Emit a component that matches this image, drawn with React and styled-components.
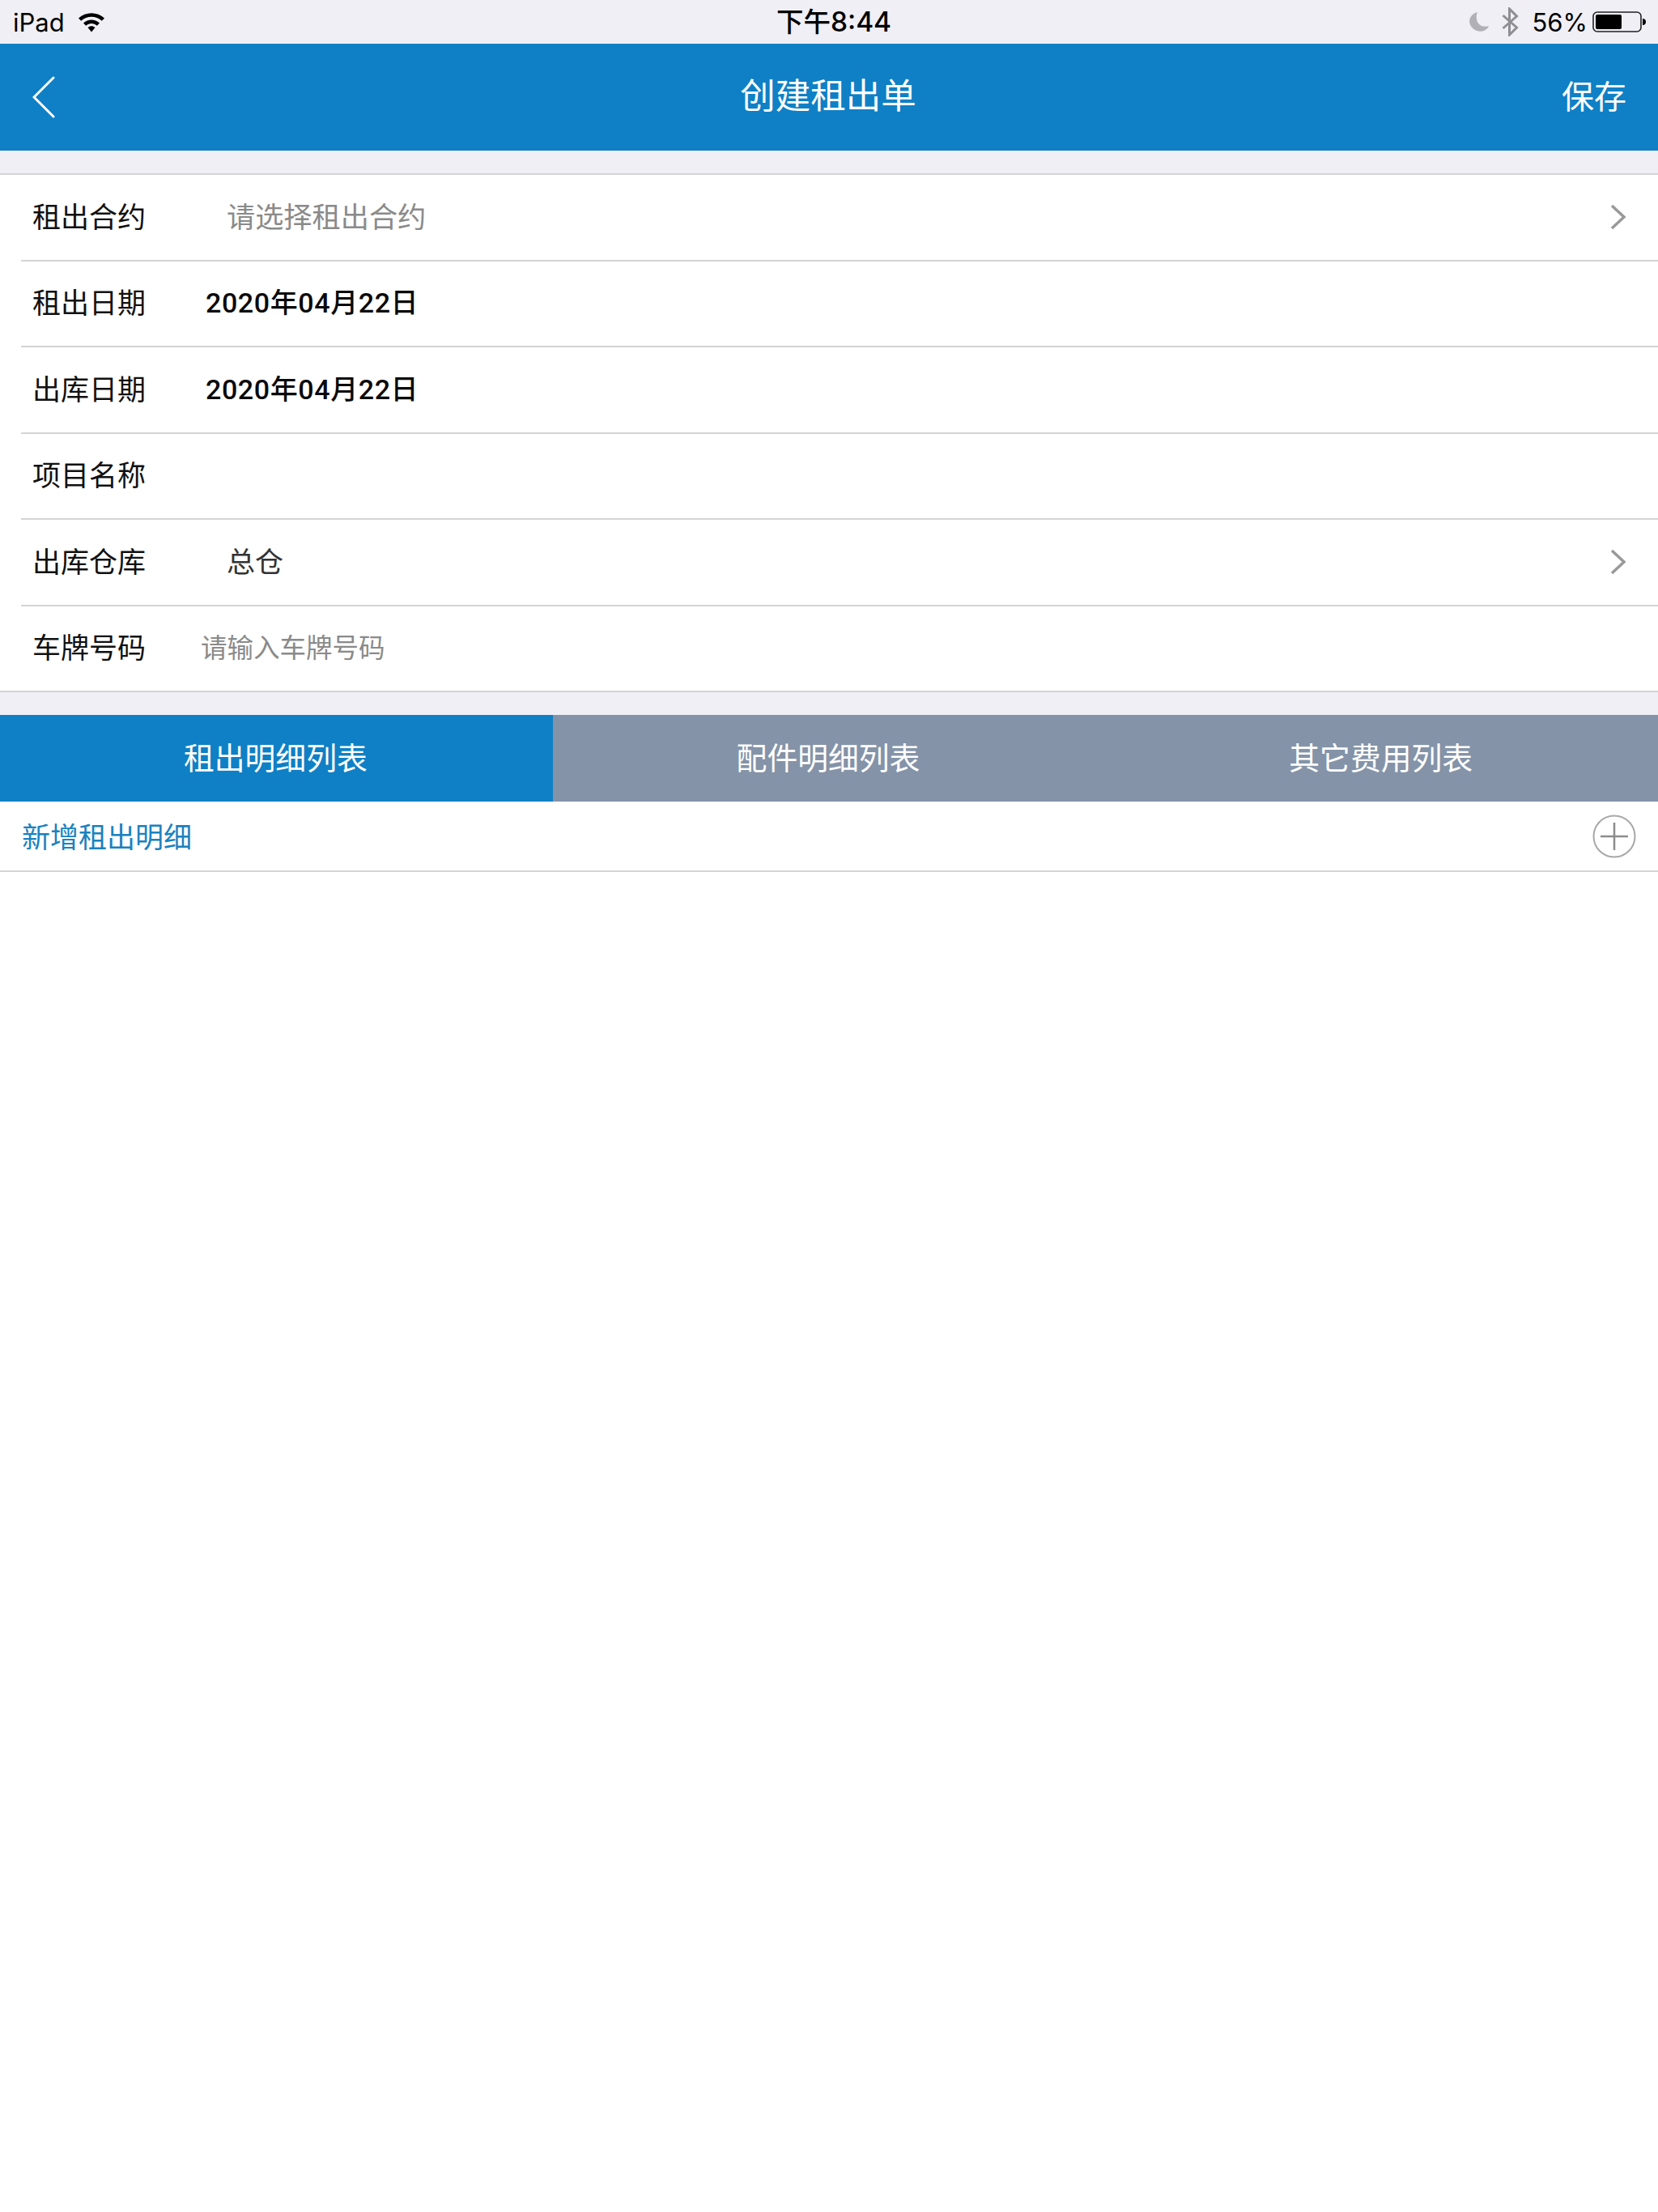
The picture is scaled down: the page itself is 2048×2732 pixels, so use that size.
import React from 'react';
import styled, { createGlobalStyle } from 'styled-components';

const GlobalStyle = createGlobalStyle`
  html, body {
    margin: 0;
    padding: 0;
    background: #fff;
    font-family: "Noto Sans CJK SC", "Liberation Sans", sans-serif;
  }
`;

const Page = styled.div`
  width: 2048px;
  height: 2732px;
  background: #fff;
  overflow: hidden;
`;

const StatusBar = styled.div`
  position: relative;
  height: 54px;
  padding: 0 15px 0 16px;
  box-sizing: border-box;
  background: #efeff5;
  display: flex;
  align-items: center;
  justify-content: space-between;
  color: #000;
  font-family: "Inter", "Liberation Sans", sans-serif;
  font-size: 31px;
`;

const StatusGroup = styled.div`
  display: flex;
  align-items: center;
  gap: ${(p) => p.$gap}px;
`;

const Clock = styled.div`
  position: absolute;
  left: 960px;
  top: 0;
  width: 140px;
  display: flex;
  justify-content: center;
  font-size: 33.5px;
  font-weight: 500;
  white-space: nowrap;
  font-family: "Inter", "Noto Sans CJK SC", sans-serif;
`;

const NavBar = styled.div`
  height: 132px;
  padding: 0 40px;
  background: #0f80c5;
  display: flex;
  align-items: center;
  justify-content: space-between;
  color: #fff;
`;

const NavTitle = styled.div`
  font-size: 43.5px;
  line-height: 1;
  margin-right: 3px;
  margin-bottom: 9px;
`;

const SaveLink = styled.div`
  font-size: 40px;
  line-height: 1;
  width: 80px;
  margin-right: -1px;
  margin-bottom: 7px;
`;

const BackIcon = styled.svg`
  width: 80px;
  height: 52px;
  display: block;
`;

const Gap = styled.div`
  height: 28px;
  background: #efeff5;
`;

const Form = styled.div`
  background: #fff;
  border-top: 2px solid #d4d4d6;
  border-bottom: 2px solid #d4d4d6;
`;

const Row = styled.div`
  height: 98.5px;
  margin-left: 26px;
  padding: 0 38px 6px 14px;
  display: flex;
  align-items: center;
  & + & {
    border-top: 2px solid #d4d4d6;
  }
`;

const Label = styled.div`
  width: 140px;
  flex: none;
  font-size: 35px;
  color: #111;
`;

const Value = styled.div`
  margin-left: ${(p) => p.$offset}px;
  font-size: ${(p) => p.$size}px;
  font-weight: ${(p) => p.$weight || 400};
  letter-spacing: ${(p) => p.$spacing || 0}px;
  color: ${(p) => p.$color};
  font-family: ${(p) => (p.$latin ? '"Roboto", "Noto Sans CJK SC", sans-serif' : 'inherit')};
  flex: 1;
`;

const Chevron = styled.svg`
  width: 22px;
  height: 34px;
  margin-top: 6px;
  display: block;
  flex: none;
`;

const Tabs = styled.div`
  display: flex;
  height: 107px;
`;

const Tab = styled.div`
  width: 683px;
  padding: 0 2px 7px 0;
  box-sizing: border-box;
  display: flex;
  align-items: center;
  justify-content: center;
  background: ${(p) => (p.$active ? '#0f80c5' : '#8493a8')};
  color: #fff;
  font-size: 37.8px;
`;

const AddRow = styled.div`
  height: 85px;
  padding: 0 27px;
  display: flex;
  align-items: center;
  justify-content: space-between;
  border-bottom: 2px solid #d4d4d6;
`;

const AddLabel = styled.div`
  font-size: 35px;
  color: #1a82bf;
  margin-bottom: 2px;
`;

const PlusIcon = styled.svg`
  width: 54px;
  height: 54px;
  display: block;
`;

const rows = [
  { label: '租出合约', value: '请选择租出合约', offset: 100, size: 35.2, color: '#8a8a8a', more: true },
  { label: '租出日期', value: '2020年04月22日', offset: 74, size: 34, spacing: 0.6, color: '#0a0a0a', weight: 500, latin: true },
  { label: '出库日期', value: '2020年04月22日', offset: 74, size: 34, spacing: 0.6, color: '#0a0a0a', weight: 500, latin: true },
  { label: '项目名称' },
  { label: '出库仓库', value: '总仓', offset: 100, size: 35, color: '#333', more: true },
  { label: '车牌号码', value: '请输入车牌号码', offset: 68, size: 32.5, color: '#8a8a8a' },
];

const App = () => (
  <Page>
    <GlobalStyle />
    <StatusBar>
      <StatusGroup $gap={16}>
        <span>iPad</span>
        <svg width="34" height="26" viewBox="0 0 34 26">
          <path d="M1 8.5C10 0 24 0 33 8.5L29.8 11.8C22.5 5 11.5 5 4.2 11.8Z" fill="#000" />
          <path d="M7 14.5C13 9 21 9 27 14.5L23.8 17.8C19.5 14 14.5 14 10.2 17.8Z" fill="#000" />
          <path d="M12.5 20C15.5 17.5 18.5 17.5 21.5 20L17 25.5Z" fill="#000" />
        </svg>
      </StatusGroup>
      <Clock>下午8:44</Clock>
      <StatusGroup $gap={15}>
        <StatusGroup $gap={14}>
          <svg width="26" height="26" viewBox="0 0 26 26">
            <path d="M11 1C3.5 3 0 9 1.5 15C3.5 22.5 13 27 20 23.5C22.5 22 24 20.5 25 18C18.5 20 12.5 17.5 10.5 12C9.5 8 9.5 4 11 1Z" fill="#b0b0b6" />
          </svg>
          <svg width="23" height="36" viewBox="0 0 22 36">
            <path d="M2 10L19 25L10 34V2L19 11L2 26" fill="none" stroke="#8e8e93" strokeWidth="3" />
          </svg>
        </StatusGroup>
        <StatusGroup $gap={6}>
          <span>56%</span>
          <svg width="66" height="26" viewBox="0 0 66 26">
            <rect x="1" y="1" width="59" height="24" rx="5" fill="none" stroke="#222" strokeWidth="1.6" />
            <rect x="4" y="4" width="32" height="18" rx="2" fill="#000" />
            <path d="M62 9C65 9 66 11 66 13C66 15 65 17 62 17Z" fill="#000" />
          </svg>
        </StatusGroup>
      </StatusGroup>
    </StatusBar>
    <NavBar>
      <BackIcon viewBox="0 0 80 52">
        <path d="M26 2L2 26L26 50" fill="none" stroke="#fff" strokeWidth="3" strokeLinecap="round" />
      </BackIcon>
      <NavTitle>创建租出单</NavTitle>
      <SaveLink>保存</SaveLink>
    </NavBar>
    <Gap />
    <Form>
      {rows.map((row) => (
        <Row key={row.label}>
          <Label>{row.label}</Label>
          {row.value && (
            <Value
              $offset={row.offset}
              $size={row.size}
              $spacing={row.spacing}
              $color={row.color}
              $weight={row.weight}
              $latin={row.latin}
            >
              {row.value}
            </Value>
          )}
          {row.more && (
            <Chevron viewBox="0 0 22 34">
              <path d="M3 3L18 17L3 31" fill="none" stroke="#999" strokeWidth="3.5" />
            </Chevron>
          )}
        </Row>
      ))}
    </Form>
    <Gap />
    <Tabs>
      <Tab $active>租出明细列表</Tab>
      <Tab>配件明细列表</Tab>
      <Tab>其它费用列表</Tab>
    </Tabs>
    <AddRow>
      <AddLabel>新增租出明细</AddLabel>
      <PlusIcon viewBox="0 0 54 54">
        <circle cx="27" cy="27" r="25.5" fill="none" stroke="#a8a8a8" strokeWidth="2" />
        <path d="M10 27H44M27 10V44" fill="none" stroke="#8c8c8c" strokeWidth="2.5" />
      </PlusIcon>
    </AddRow>
  </Page>
);

export default App;
